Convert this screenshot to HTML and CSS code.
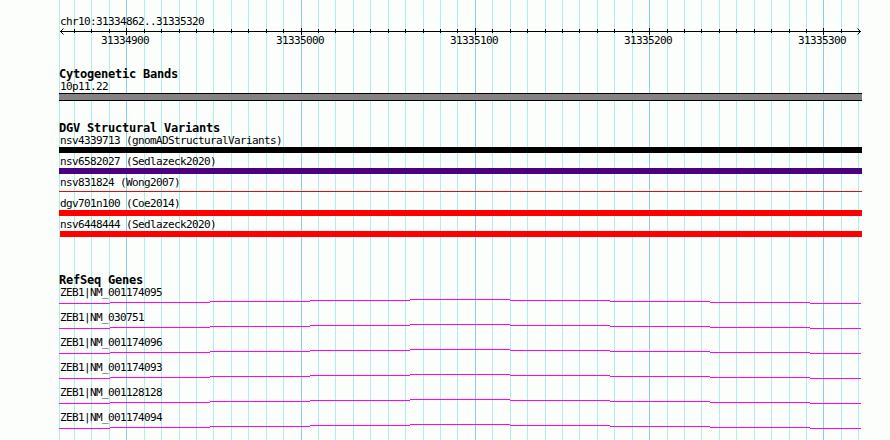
FILE: index.html
```html
<!DOCTYPE html>
<html lang="en">
<head>
  <meta charset="UTF-8">
  <title>chr10:31334862..31335320</title>
  <link rel="stylesheet" href="styles.css">
</head>
<body>

  <div class="browser">
    <!-- Grid lines behind every track -->
    <svg class="grid" width="890" height="440" shape-rendering="crispEdges">
      <path class="minor" d="M59.5 0v440M74.5 0v440M91.5 0v440M109.5 0v440M144.5 0v440M161.5 0v440M179.5 0v440M196.5 0v440M213.5 0v440M231.5 0v440M248.5 0v440M266.5 0v440M283.5 0v440M318.5 0v440M335.5 0v440M353.5 0v440M370.5 0v440M388.5 0v440M405.5 0v440M423.5 0v440M440.5 0v440M457.5 0v440M492.5 0v440M510.5 0v440M527.5 0v440M545.5 0v440M562.5 0v440M579.5 0v440M597.5 0v440M614.5 0v440M632.5 0v440M667.5 0v440M684.5 0v440M701.5 0v440M719.5 0v440M736.5 0v440M754.5 0v440M771.5 0v440M789.5 0v440M806.5 0v440M841.5 0v440M858.5 0v440"/>
      <path class="major" d="M126.5 0v440M301.5 0v440M475.5 0v440M649.5 0v440M823.5 0v440"/>
    </svg>

    <!-- Scale -->
    <div class="scale">
      <div class="label">chr10:31334862..31335320</div>
      <svg class="ruler" width="803" height="8" viewBox="59 28 803 8" shape-rendering="crispEdges">
        <path d="M60 31.5H861M74.5 29v4M91.5 29v4M109.5 29v4M144.5 29v4M161.5 29v4M179.5 29v4M196.5 29v4M213.5 29v4M231.5 29v4M248.5 29v4M266.5 29v4M283.5 29v4M318.5 29v4M335.5 29v4M353.5 29v4M370.5 29v4M388.5 29v4M405.5 29v4M423.5 29v4M440.5 29v4M457.5 29v4M492.5 29v4M510.5 29v4M527.5 29v4M545.5 29v4M562.5 29v4M579.5 29v4M597.5 29v4M614.5 29v4M632.5 29v4M667.5 29v4M684.5 29v4M701.5 29v4M719.5 29v4M736.5 29v4M754.5 29v4M771.5 29v4M789.5 29v4M806.5 29v4M841.5 29v4"/>
        <path d="M126.5 28v7M301.5 28v7M475.5 28v7M649.5 28v7M823.5 28v7"/>
        <path d="M63.5 28.5L60.5 31.5L63.5 34.5M857.5 28.5L860.5 31.5L857.5 34.5" shape-rendering="auto"/>
      </svg>
      <div class="numbers">
        <span>31334900</span>
        <span>31335000</span>
        <span>31335100</span>
        <span>31335200</span>
        <span>31335300</span>
      </div>
    </div>

    <div class="track bands">
      <h2>Cytogenetic Bands</h2>
      <div class="label">10p11.22</div>
      <div class="band"></div>
    </div>

    <div class="track variants">
      <h2>DGV Structural Variants</h2>
      <div class="variant">
        <div class="label">nsv4339713 (gnomADStructuralVariants)</div>
        <div class="bar black"></div>
      </div>
      <div class="variant">
        <div class="label">nsv6582027 (Sedlazeck2020)</div>
        <div class="bar purple"></div>
      </div>
      <div class="variant">
        <div class="label">nsv831824 (Wong2007)</div>
        <div class="bar thin"></div>
      </div>
      <div class="variant">
        <div class="label">dgv701n100 (Coe2014)</div>
        <div class="bar red"></div>
      </div>
      <div class="variant">
        <div class="label">nsv6448444 (Sedlazeck2020)</div>
        <div class="bar red last"></div>
      </div>
    </div>

    <div class="track genes">
      <h2>RefSeq Genes</h2>
      <svg class="defs" width="0" height="0">
        <path id="intron" d="M0 4.5H51M51 3.5H151M151 2.5H251M251 1.5H351M351 .5H451M451 1.5H551M551 2.5H651M651 3.5H751M751 4.5H802"/>
      </svg>
      <div class="gene">
        <div class="label">ZEB1|NM_001174095</div>
        <svg class="intron" width="803" height="5"><use href="#intron"/></svg>
      </div>
      <div class="gene">
        <div class="label">ZEB1|NM_030751</div>
        <svg class="intron" width="803" height="5"><use href="#intron"/></svg>
      </div>
      <div class="gene">
        <div class="label">ZEB1|NM_001174096</div>
        <svg class="intron" width="803" height="5"><use href="#intron"/></svg>
      </div>
      <div class="gene">
        <div class="label">ZEB1|NM_001174093</div>
        <svg class="intron" width="803" height="5"><use href="#intron"/></svg>
      </div>
      <div class="gene">
        <div class="label">ZEB1|NM_001128128</div>
        <svg class="intron" width="803" height="5"><use href="#intron"/></svg>
      </div>
      <div class="gene">
        <div class="label">ZEB1|NM_001174094</div>
        <svg class="intron" width="803" height="5"><use href="#intron"/></svg>
      </div>
    </div>
  </div>

</body>
</html>
```
FILE: styles.css
```css
body {
  margin: 0;
  background-color: #fcfefc;
  color: #000;
  font-family: "DejaVu Sans Mono", monospace;
  font-size: 11px;
  line-height: 14px;
  letter-spacing: -0.62px;
}
.browser {
  position: relative;
  box-sizing: border-box;
  width: 890px;
  height: 440px;
  padding: 15px 28px 0 59px;
  overflow: hidden;
}
svg {
  display: block;
  fill: none;
}
.grid {
  position: absolute;
  top: 0;
  left: 0;
  z-index: -1;
}
.minor {
  stroke: #afeeee;
}
.major {
  stroke: #87ceeb;
}
.label {
  height: 12px;
  padding-left: 1px;
  white-space: pre;
}
h2 {
  height: 12px;
  margin: 0;
  font-size: 12px;
  line-height: 12px;
  letter-spacing: -0.22px;
}

/* Scale */
.scale {
  height: 53px;
}
.ruler {
  margin-top: 1px;
  stroke: #000;
}
.numbers {
  display: flex;
  margin-top: -2px;
  padding-left: 42px;
}
.numbers span {
  width: 174px;
  flex: none;
}
.numbers span:first-child {
  width: 175px;
}

/* Tracks */
.bands {
  height: 54px;
}
.band {
  box-sizing: border-box;
  width: 803px;
  height: 8px;
  margin-top: 1px;
  background: #848284;
  border-top: 1px solid #000;
  border-bottom: 1px solid #000;
}
.variants {
  height: 152px;
}
.variant {
  height: 21px;
}
.bar {
  width: 803px;
  height: 6px;
  margin-top: 1px;
}
.black {
  background: #000;
}
.purple {
  background: #4b0082;
}
.red {
  background: #ff0000;
}
.thin {
  height: 1px;
  margin-top: 3px;
  background: #d81010;
}
.last {
  width: 802px;
  margin-left: 1px;
}
.gene {
  height: 25px;
}
.defs {
  position: absolute;
}
.intron {
  stroke: #ff00ff;
  shape-rendering: crispEdges;
  margin-top: 1px;
}
```
